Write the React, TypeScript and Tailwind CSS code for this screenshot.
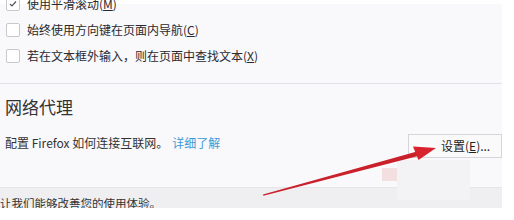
import React from "react";

const cjk = "font-['Noto_Sans_CJK_SC','Noto_Sans',sans-serif]";

type Row = { label: string; key: string; checked?: boolean };

const rows: Row[] = [
    { label: "使用平滑滚动", key: "M", checked: true },
    { label: "始终使用方向键在页面内导航", key: "C" },
    { label: "若在文本框外输入，则在页面中查找文本", key: "X" },
];

function Checkbox({ checked }: { checked?: boolean }) {
    return (
        <div className="w-[14px] h-[14px] shrink-0 rounded-[2px] border border-[#c9c8cd] bg-white flex items-center justify-center">
            {checked && (
                <svg width="8" height="8" viewBox="0 0 8 8">
                    <path d="M1 4 L3 6 L7 1.5" stroke="#555" strokeWidth="1.2" fill="none" />
                </svg>
            )}
        </div>
    );
}

export default function App() {
    return (
        <div className={`relative w-[514px] h-[220px] bg-white overflow-hidden text-[#2a2a2e] ${cjk}`}>
            <div className="w-[502px] h-[204px] mt-[4px] bg-[#f9f8fb] flex flex-col">
                {/* checkbox rows */}
                <div className="mt-[-13px] flex flex-col">
                    {rows.map((r) => (
                        <div key={r.key} className="h-[26px] flex items-center pl-[6px] gap-[7px] text-[12px] leading-[16px]">
                            <Checkbox checked={r.checked} />
                            <span>
                                {r.label}(<u>{r.key}</u>)
                            </span>
                        </div>
                    ))}
                </div>

                <div className="mt-[14px] border-t border-[#e2e1e6]" />

                {/* proxy section */}
                <div className="pt-[11px] pl-[5px] text-[17px] leading-[24px] text-[#333]">网络代理</div>

                <div className="mt-[12px] h-[24px] flex items-center">
                    <div className="pl-[5px] text-[12px] leading-[16px] text-[#333]">
                        配置 Firefox 如何连接互联网。
                        <span className="ml-[4px] text-[#3d9ad6]">详细了解</span>
                    </div>
                    <div className="ml-auto mt-[5px] w-[94px] h-[24px] border border-[#d6d5da] bg-[#fafafb] text-[12px] leading-[22px] pl-[32px] text-[#222]">
                        设置(<u>E</u>)...
                    </div>
                </div>

                <div className="flex-1" />

                <div className="h-[21px] border-t border-[#e6e6e9] bg-[#efeff1] overflow-hidden">
                    <div className="pt-[7px] text-[11.5px] leading-[16px] text-[#333]">让我们能够改善您的使用体验。</div>
                </div>
            </div>

            {/* faint ghost of screen artifacts */}
            <div className="absolute left-[397px] top-[160px] w-[73px] h-[40px] bg-[#f3f3f5]" />
            <div className="absolute left-[382px] top-[168px] w-[15px] h-[13px] bg-[#f3dfe0]" />

            {/* red annotation arrow */}
            <svg className="absolute left-0 top-0" width="514" height="220" viewBox="0 0 514 220">
                <polygon points="263,194.4 417,151.6 418.2,156 263.4,195.8" fill="#c9202b" />
                <polygon points="436,148 413,146.5 418.5,160" fill="#d8232f" />
            </svg>
        </div>
    );
}
